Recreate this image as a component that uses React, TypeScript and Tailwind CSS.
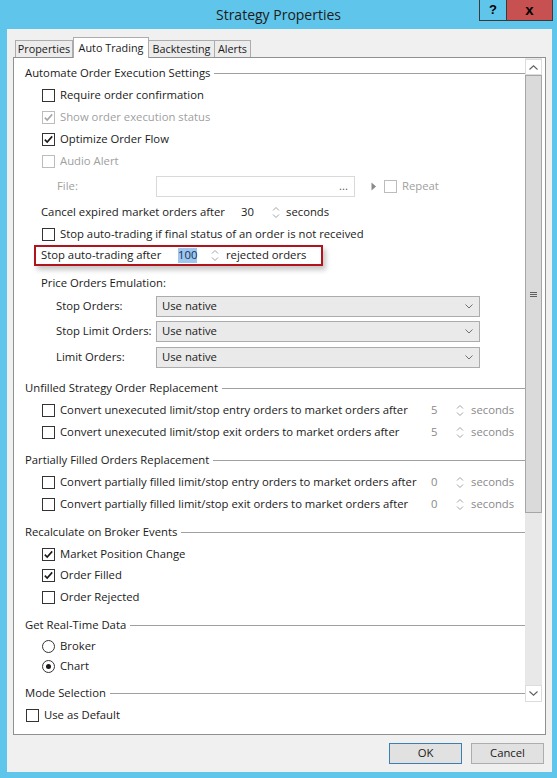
import React from 'react';

const TEXT = "font-['Open_Sans','Liberation_Sans',sans-serif] text-[11.3px] text-[#1a1a1a]";

function CheckBox({ checked = false, disabled = false }: { checked?: boolean; disabled?: boolean }) {
  return (
    <span
      className={`flex h-[13px] w-[13px] shrink-0 items-center justify-center border bg-white ${
        disabled ? 'border-[#bcbcbc]' : 'border-[#333333]'
      }`}
    >
      {checked && (
        <svg width="11" height="11" viewBox="0 0 11 11">
          <path d="M1.8 5.6 L4.2 8.1 L9.2 2.4" fill="none" stroke={disabled ? '#a6a6a6' : '#1a1a1a'} strokeWidth="1.6" />
        </svg>
      )}
    </span>
  );
}

function Radio({ checked = false }: { checked?: boolean }) {
  return (
    <span className="flex h-[13px] w-[13px] shrink-0 items-center justify-center rounded-full border border-[#333333] bg-white">
      {checked && <span className="h-[5px] w-[5px] rounded-full bg-[#1a1a1a]" />}
    </span>
  );
}

function Spinner() {
  return (
    <svg width="8" height="15" viewBox="0 0 8 15" className="shrink-0">
      <path d="M1 5.5 L4 2.5 L7 5.5" fill="none" stroke="#a3a3a3" strokeWidth="1" />
      <path d="M1 9.5 L4 12.5 L7 9.5" fill="none" stroke="#a3a3a3" strokeWidth="1" />
    </svg>
  );
}

function GroupHeader({ title, className = '' }: { title: string; className?: string }) {
  return (
    <div className={`flex h-[22px] shrink-0 items-center gap-[4px] ${className}`}>
      <span className="whitespace-nowrap">{title}</span>
      <span className="h-px flex-1 bg-[#a0a0a0]" />
    </div>
  );
}

function CheckRow({
  label,
  checked,
  disabled,
  className = 'h-[22px]',
}: {
  label: string;
  checked?: boolean;
  disabled?: boolean;
  className?: string;
}) {
  return (
    <div className={`flex shrink-0 items-center gap-[5px] pl-[17px] ${className}`}>
      <CheckBox checked={checked} disabled={disabled} />
      <span className={`whitespace-nowrap ${disabled ? 'text-[#a0a0a0]' : ''}`}>{label}</span>
    </div>
  );
}

function ConvertRow({ label, value }: { label: string; value: string }) {
  return (
    <div className="flex h-[22px] shrink-0 items-center pl-[17px]">
      <CheckBox />
      <span className="ml-[5px] w-[371px] whitespace-nowrap">{label}</span>
      <span className="w-[25px] text-[#8a8a8a]">{value}</span>
      <Spinner />
      <span className="ml-[7px] text-[#8a8a8a]">seconds</span>
    </div>
  );
}

function Combo({ label, className = '' }: { label: string; className?: string }) {
  return (
    <div className={`flex h-[21px] shrink-0 items-center pl-[31px] ${className}`}>
      <span className="w-[100px] whitespace-nowrap">{label}</span>
      <div className="flex h-[21px] w-[324px] items-center justify-between border border-[#acacac] bg-[#eaeaea] pl-[5px] pr-[6px]">
        <span>Use native</span>
        <svg width="8" height="5" viewBox="0 0 8 5">
          <path d="M0.5 0.5 L4 4 L7.5 0.5" fill="none" stroke="#707070" strokeWidth="1" />
        </svg>
      </div>
    </div>
  );
}

function Tab({ label, width, active = false }: { label: string; width: string; active?: boolean }) {
  return active ? (
    <div
      className={`relative z-10 -mb-px flex h-[21px] items-start justify-center border-x border-t border-[#acacac] bg-white pt-[2px] ${width}`}
    >
      {label}
    </div>
  ) : (
    <div className={`flex h-[17px] items-center justify-center border-t border-r border-[#acacac] bg-[#ececec] ${width} first:border-l`}>
      {label}
    </div>
  );
}

export default function App() {
  return (
    <div className={`flex h-[778px] w-[557px] flex-col bg-[#60c5ea] ${TEXT}`}>
      {/* Title bar */}
      <div className="relative flex h-[29px] shrink-0 items-center justify-center">
        <span className="text-[14px] text-[#1b1b1b]">Strategy Properties</span>
        <div className="absolute right-[4px] top-0 flex h-[21px] border-x border-b border-[#3a3a3a]">
          <div className="flex w-[27px] items-center justify-center border-r border-[#3a3a3a] font-['Liberation_Sans',sans-serif] text-[13px] font-bold text-black">
            ?
          </div>
          <div className="flex w-[45px] items-center justify-center bg-[#c75050] font-['Liberation_Sans',sans-serif] text-[15px] font-bold text-black">
            x
          </div>
        </div>
      </div>

      {/* Client area */}
      <div className="ml-[7px] mr-[5px] flex h-[743px] flex-col bg-[#f0f0f0] px-[6px] pt-[8px]">
        {/* Tabs */}
        <div className="flex h-[20px] items-end pl-[2px] text-[10.8px]">
          <Tab label="Properties" width="w-[58px]" />
          <Tab label="Auto Trading" width="w-[76px]" active />
          <Tab label="Backtesting" width="w-[66px]" />
          <Tab label="Alerts" width="w-[36px]" />
        </div>

        {/* Panel */}
        <div className="flex h-[678px] flex-col border border-[#8f9090] bg-white">
          <div className="flex h-[644px] shrink-0">
            {/* Scrollable content */}
            <div className="flex flex-1 flex-col overflow-hidden pl-[11px] pt-[4px]">
              <GroupHeader title="Automate Order Execution Settings" />
              <CheckRow label="Require order confirmation" />
              <CheckRow label="Show order execution status" checked disabled />
              <CheckRow label="Optimize Order Flow" checked />
              <CheckRow label="Audio Alert" disabled className="h-[23px]" />

              <div className="mt-[3px] flex h-[21px] shrink-0 items-center pl-[32px] text-[#a0a0a0]">
                <span className="w-[99px]">File:</span>
                <div className="flex h-[21px] w-[199px] items-center justify-end border border-[#d9d9d9] bg-white pr-[6px] text-[#606060]">
                  ...
                </div>
                <svg width="6" height="9" viewBox="0 0 6 9" className="ml-[16px]">
                  <path d="M0.5 0.5 L5 4.5 L0.5 8.5 Z" fill="#8a8a8a" />
                </svg>
                <span className="ml-[7px]">
                  <CheckBox disabled />
                </span>
                <span className="ml-[5px]">Repeat</span>
              </div>

              <div className="mt-[4px] flex h-[22px] shrink-0 items-center pl-[16px]">
                <span className="w-[200px] whitespace-nowrap">Cancel expired market orders after</span>
                <span className="w-[31px]">30</span>
                <Spinner />
                <span className="ml-[6px]">seconds</span>
              </div>

              <CheckRow label="Stop auto-trading if final status of an order is not received" />

              <div className="ml-[9px] flex h-[21px] w-[289px] shrink-0 items-center border-2 border-[#b0141c] pl-[5px] shadow-[3px_4px_5px_rgba(0,0,0,0.22)]">
                <span className="w-[137px] whitespace-nowrap">Stop auto-trading after</span>
                <span className="flex h-[15px] w-[19px] items-center bg-[#9dc7ee] text-[#17305a]">100</span>
                <span className="ml-[14px]">
                  <Spinner />
                </span>
                <span className="ml-[7px] whitespace-nowrap">rejected orders</span>
              </div>

              <div className="mt-[6px] flex h-[22px] shrink-0 items-center pl-[16px]">Price Orders Emulation:</div>
              <Combo label="Stop Orders:" className="mt-[2px]" />
              <Combo label="Stop Limit Orders:" className="mt-[4px]" />
              <Combo label="Limit Orders:" className="mt-[5px]" />

              <GroupHeader title="Unfilled Strategy Order Replacement" className="mt-[9px]" />
              <ConvertRow label="Convert unexecuted limit/stop entry orders to market orders after" value="5" />
              <ConvertRow label="Convert unexecuted limit/stop exit orders to market orders after" value="5" />

              <GroupHeader title="Partially Filled Orders Replacement" className="mt-[6px]" />
              <ConvertRow label="Convert partially filled limit/stop entry orders to market orders after" value="0" />
              <ConvertRow label="Convert partially filled limit/stop exit orders to market orders after" value="0" />

              <GroupHeader title="Recalculate on Broker Events" className="mt-[6px]" />
              <CheckRow label="Market Position Change" checked />
              <CheckRow label="Order Filled" checked className="h-[21px]" />
              <CheckRow label="Order Rejected" />

              <GroupHeader title="Get Real-Time Data" className="mt-[6px]" />
              <div className="flex h-[20px] shrink-0 items-center gap-[5px] pl-[17px]">
                <Radio />
                <span>Broker</span>
              </div>
              <div className="flex h-[20px] shrink-0 items-center gap-[5px] pl-[17px]">
                <Radio checked />
                <span>Chart</span>
              </div>

              <GroupHeader title="Mode Selection" className="mt-[6px]" />
            </div>

            {/* Scrollbar */}
            <div className="mr-[3px] flex w-[17px] flex-col bg-[#e8e8e8] pt-px">
              <div className="flex h-[16px] items-center justify-center border border-[#dcdcdc] bg-white">
                <svg width="9" height="5" viewBox="0 0 9 5">
                  <path d="M0.5 4.5 L4.5 0.8 L8.5 4.5" fill="none" stroke="#606060" strokeWidth="1.1" />
                </svg>
              </div>
              <div className="flex h-[438px] items-center justify-center border border-[#a6a6a6] bg-[#dadada]">
                <div className="flex w-[7px] flex-col gap-px">
                  <span className="h-px bg-[#606060]" />
                  <span className="h-px bg-[#606060]" />
                  <span className="h-px bg-[#606060]" />
                </div>
              </div>
              <div className="flex-1" />
              <div className="flex h-[17px] items-center justify-center border border-[#dcdcdc] bg-white">
                <svg width="9" height="5" viewBox="0 0 9 5">
                  <path d="M0.5 0.5 L4.5 4.2 L8.5 0.5" fill="none" stroke="#606060" strokeWidth="1.1" />
                </svg>
              </div>
            </div>
          </div>

          <div className="mt-[2px] flex h-[22px] items-center gap-[5px] pl-[12px]">
            <CheckBox />
            <span>Use as Default</span>
          </div>
        </div>

        {/* Buttons */}
        <div className="mt-[8px] flex justify-end gap-[9px] pr-[2px]">
          <button className="h-[21px] w-[73px] border border-[#3c7fb1] bg-[#e1e1e1] text-[11.3px] text-[#1a1a1a]">OK</button>
          <button className="h-[21px] w-[73px] border border-[#adadad] bg-[#e1e1e1] text-[11.3px] text-[#1a1a1a]">Cancel</button>
        </div>
      </div>
    </div>
  );
}
